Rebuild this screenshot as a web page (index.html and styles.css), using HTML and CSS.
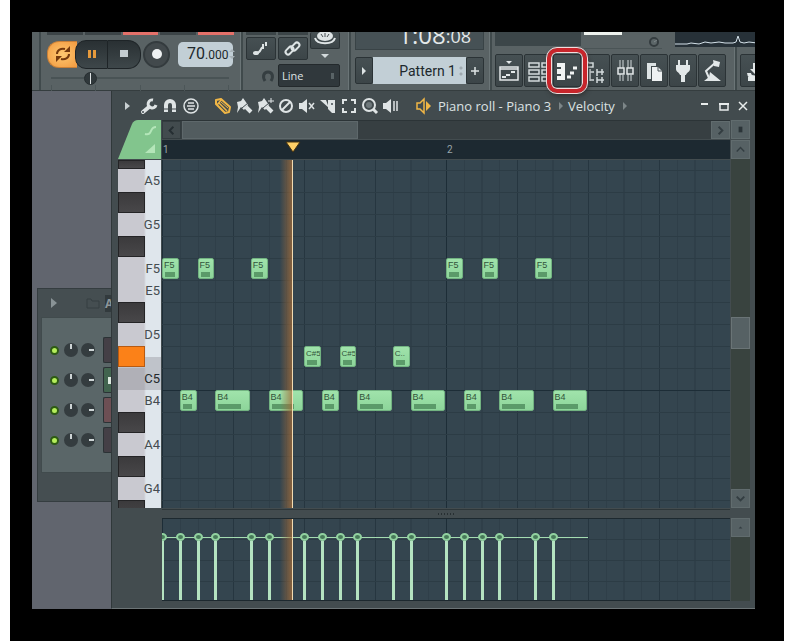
FILE: index.html
```html
<!DOCTYPE html>
<html lang="en">
<head>
<meta charset="utf-8">
<title>Piano roll - Piano 3</title>
<link rel="stylesheet" href="styles.css">
</head>
<body>
<main class="frame">
<div class="app">
  <header class="toolbar">
    <div class="group edge"></div>
    <section class="group transport" aria-label="Transport">
      <div class="stubs"><i></i><i></i><i class="hot"></i><i></i><i class="hot"></i></div>
      <div class="transport-row">
        <button class="loop" aria-label="Loop"><svg viewBox="0 0 18 18"><path d="M3 9c0-4 4-6 8-5M15 9c0 4-4 6-8 5" fill="none" stroke="#74390d" stroke-width="2"/><path d="M10 7h6V1zM8 11H2v6z" fill="#74390d"/></svg></button>
        <button class="pause" aria-label="Pause"><svg viewBox="0 0 18 18"><path d="M5 5h3v8H5zM10 5h3v8h-3z" fill="#e69a3c"/></svg></button>
        <button class="stop" aria-label="Stop"><svg viewBox="0 0 18 18"><path d="M5 5h8v7H5z" fill="#c3ccd0"/></svg></button>
        <button class="record" aria-label="Record"><svg viewBox="0 0 18 18"><circle cx="9" cy="9" r="5" fill="#eef1f2"/></svg></button>
        <div class="tempo" role="group" aria-label="Tempo"><span class="tempo-int">70</span><span>.000</span><svg viewBox="0 0 6 12"><path d="M0 4l3-3 3 3zM0 8l3 3 3-3z" fill="#a9b3b8"/></svg></div>
      </div>
      <input class="position" type="range" min="0" max="100" value="20" aria-label="Song position">
      <div class="ticks"><i></i><i></i><i></i><i></i><i></i></div>
    </section>
    <section class="group tools" aria-label="Tools">
      <div class="tool-top">
        <div class="tool-pair">
          <i></i><i></i>
          <button class="dark" aria-label="Step edit"><svg viewBox="0 0 20 20"><path d="M5 14c6 0 3-4 7-6" fill="none" stroke="#dde3e4" stroke-width="2"/><ellipse cx="5" cy="14" rx="3" ry="2" fill="#dde3e4"/><path d="M11 5h2v5h-2zM14 3h2v4h-2z" fill="#dde3e4"/></svg></button>
          <button class="dark" aria-label="Link"><svg viewBox="0 0 20 20"><g fill="none" stroke="#dde3e4" stroke-width="2"><rect x="2" y="9" width="9" height="5" rx="2.500" transform="rotate(-45 6.500 11.500)"/><rect x="8" y="5" width="9" height="5" rx="2.500" transform="rotate(-45 12.500 7.500)"/></g></svg></button>
        </div>
        <div class="tool-side">
          <button class="dark half" aria-label="Render"><svg viewBox="0 0 24 16"><ellipse cx="12" cy="4" rx="8" ry="5" fill="#dfe5e6"/><path d="M2 6c2 7 18 7 20 0" fill="none" stroke="#dfe5e6" stroke-width="2"/><path d="M8 2l2 3M12 1v4M16 2l-2 3" stroke="#495154" stroke-width="1"/></svg></button>
          <span class="down"></span>
        </div>
      </div>
      <div class="snap">
        <svg viewBox="0 0 14 14"><path d="M4 12C1 7 3 3 7 3s6 4 3 9" fill="none" stroke="#353e41" stroke-width="3"/></svg>
        <select aria-label="Snap"><option>Line</option></select>
      </div>
    </section>
    <section class="group pattern" aria-label="Pattern">
      <div class="clock"><span>1:08</span><small>:08</small></div>
      <div class="pattern-row">
        <button class="dark" aria-label="Pattern menu"><svg viewBox="0 0 10 10"><path d="M3 1l4 4-4 4z" fill="#dde3e4"/></svg></button>
        <input type="text" value="Pattern 1" aria-label="Pattern name">
        <button class="dark" aria-label="Add pattern"><svg viewBox="0 0 10 10"><path d="M5 1v8M1 5h8" stroke="#dde3e4" fill="none" stroke-width="1.500"/></svg></button>
      </div>
    </section>
    <section class="group windows" aria-label="Windows">
      <div class="meters">
        <div class="hint"></div>
        <div class="cpu"><i></i><svg viewBox="0 0 10 10"><circle cx="5" cy="5" r="4" fill="#5c6668" stroke="#343c3f" stroke-width="2"/><path d="M5 5l3-2" stroke="#7d8688"/></svg></div>
      </div>
      <nav class="window-buttons">
        <button class="dark" aria-label="Playlist"><svg viewBox="0 0 22 26"><path d="M8 3h6l-3 3z" fill="#e3e8e9"/><path d="M2 9h18v13H2zM2 11h18" fill="none" stroke="#e3e8e9" stroke-width="1.500"/><path d="M4 19h4M8 17h4M13 14h4" stroke="#e3e8e9" stroke-width="2"/></svg></button>
        <button class="dark" aria-label="Step sequencer"><svg viewBox="0 0 22 26"><path d="M2 5h10v4H2zM2 12h10v4H2zM2 19h10v4H2zM15 5h6v4h-6zM15 12h6v4h-6zM15 19h6v4h-6z" fill="none" stroke="#d3dadc" stroke-width="1.500"/></svg></button>
        <button class="dark marked" aria-label="Piano roll"><svg viewBox="0 0 22 26"><path d="M1 5h8v17H1v-4h4v-2H1v-5h4V9H1z" fill="#f1f4f4"/><path d="M11 19h4M14 15h4M17 10h4" stroke="#f1f4f4" stroke-width="3"/></svg></button>
        <button class="dark" aria-label="Browser"><svg viewBox="0 0 22 26"><path d="M0 9V4h3l1 1h4v4zM5 11v12M5 14h4M5 22h4M12 11v7M12 14h7M17 11v6M12 19v6M12 22h7M17 19v6" fill="none" stroke="#d3dadc" stroke-width="1.500"/></svg></button>
        <button class="dark" aria-label="Mixer"><svg viewBox="0 0 22 26"><path d="M6 2v21M9 2v8M9 17v6M14 2v21M17 2v8M17 17v6" stroke="#d3dadc" fill="none"/><path d="M4 10h6v6H4zM13 10h6v6h-6z" fill="#4b5558" stroke="#e3e8e9" stroke-width="1.500"/></svg></button>
        <button class="dark" aria-label="Project"><svg viewBox="0 0 22 26"><path d="M4 5h9v3H8v13H4z" fill="#dde3e4"/><path d="M9 9h6l4 4v10H9z" fill="#eef1f2"/><path d="M15 9v4h4" fill="none" stroke="#4b5558"/></svg></button>
        <button class="dark" aria-label="Plugins"><svg viewBox="0 0 22 26"><path d="M7 2v6M15 2v6" stroke="#e3e8e9" stroke-width="2"/><path d="M4 7h14v4c0 3-3 3-4 6h-1v7H9v-7H8c-1-3-4-3-4-6z" fill="#e3e8e9"/></svg></button>
        <button class="dark" aria-label="Tempo tapper"><svg viewBox="0 0 22 26"><path d="M3 23l5-4 1-5 11 9z" fill="#e3e8e9"/><path d="M8 20L5 13l9-8" fill="none" stroke="#e3e8e9" stroke-width="2"/><path d="M12 2l7 2-1 5-5-1z" fill="#e3e8e9"/></svg></button>
      </nav>
    </section>
    <section class="group last" aria-label="Save">
      <svg class="scope" viewBox="0 0 82 15" preserveAspectRatio="none"><path d="M0 12h12l4-1 8 1 6-2 6 1 8-1 6 1h8l3-1 2-6 2 6 4 1 5-1 8 1" fill="none" stroke="#d5e2ea"/></svg>
      <button class="dark" aria-label="Save"><svg viewBox="0 0 22 26"><path d="M6 15c0 6 12 6 12 0M5 21h14" fill="none" stroke="#e3e8e9" stroke-width="4"/><path d="M10 5h6v6h4l-7 6-6-6h3z" fill="#e3e8e9"/></svg></button>
    </section>
  </header>

  <div class="workspace">
    <aside class="dock">
      <section class="rack" aria-label="Channel rack">
        <div class="rack-head"><svg viewBox="0 0 8 10"><path d="M1 0l6 5-6 5z" fill="#899396"/></svg><svg class="folder" viewBox="0 0 14 12"><path d="M1 11V2h4l1 2h7v7z" fill="none" stroke="#363f42"/></svg><b>A</b></div>
        <div class="rack-body" id="rack"></div>
      </section>
    </aside>

    <section class="roll" aria-label="Piano roll">
      <div class="titlebar">
        <div class="icons first">
          <button aria-label="Menu"><svg viewBox="0 0 18 18"><path d="M6 5l5 4-5 4z" fill="#c9d0d2"/></svg></button>
          <button aria-label="Tools"><svg viewBox="0 0 18 18"><path d="M3 15l6-5" stroke="#dfe4e5" stroke-width="4" stroke-linecap="round"/><path d="M13 3a4 4 0 1 0 3 5" fill="none" stroke="#dfe4e5" stroke-width="3"/><circle cx="3" cy="15" r="1" fill="#424b4f"/></svg></button>
          <button aria-label="Magnet"><svg viewBox="0 0 18 18"><path d="M5 15V8a4 4 0 0 1 8 0v7" fill="none" stroke="#dfe4e5" stroke-width="4"/><path d="M3 12h4M11 12h4" stroke="#424b4f"/></svg></button>
          <button aria-label="Stamp"><svg viewBox="0 0 18 18"><circle cx="9" cy="9" r="7" fill="none" stroke="#dfe4e5" stroke-width="1.500"/><path d="M6 6h6M5 9h8M6 12h6" stroke="#dfe4e5" stroke-width="1.500"/></svg></button>
        </div>
        <div class="icons second">
          <button aria-label="Draw"><svg viewBox="0 0 18 18"><path d="M2 7V3l5-1 9 8-1 5-4 1z" fill="none" stroke="#f0b646" stroke-width="2" stroke-linejoin="round"/><path d="M3 8l5-6M5 6l8 8" stroke="#f0b646" stroke-width="1.500"/><path d="M7 5l7 6" stroke="#f0b646"/></svg></button>
          <button aria-label="Paint"><svg viewBox="0 0 18 18"><path d="M2 5l4-1 2-3 5 7-4 5-3-3-4 6 1-6z" fill="#dfe4e5"/><path d="M11 10l5 5" stroke="#dfe4e5" stroke-width="4"/><path d="M7 11l6-5" stroke="#424b4f"/></svg></button>
          <button aria-label="Paint sequence"><svg viewBox="0 0 18 18"><path d="M2 5l4-1 2-3 5 7-4 5-3-3-4 6 1-6z" fill="#dfe4e5"/><path d="M11 10l5 5" stroke="#dfe4e5" stroke-width="4"/><path d="M7 11l6-5" stroke="#424b4f"/><path d="M15 1v5M12 4h6" stroke="#dfe4e5"/></svg></button>
          <button aria-label="Delete"><svg viewBox="0 0 18 18"><circle cx="9" cy="9" r="6" fill="none" stroke="#dfe4e5" stroke-width="2"/><path d="M5 13l8-8" stroke="#dfe4e5" stroke-width="2"/></svg></button>
          <button aria-label="Mute"><svg viewBox="0 0 18 18"><path d="M1 6h3l5-4v14l-5-4H1z" fill="#dfe4e5"/><path d="M11 6l5 6M16 6l-5 6" stroke="#dfe4e5" stroke-width="1.500"/></svg></button>
          <button aria-label="Slice"><svg viewBox="0 0 18 18"><path d="M1 3h6l3 8z" fill="#dfe4e5"/><path d="M9 3h7v13h-3l-4-4z" fill="#dfe4e5"/><circle cx="13" cy="7" r="1" fill="#424b4f"/></svg></button>
          <button aria-label="Select"><svg viewBox="0 0 18 18"><path d="M3 7V3h4M11 3h4v4M15 11v4h-4M7 15H3v-4" fill="none" stroke="#dfe4e5" stroke-width="2"/></svg></button>
          <button aria-label="Zoom"><svg viewBox="0 0 18 18"><circle cx="8" cy="8" r="6" fill="none" stroke="#dfe4e5" stroke-width="2"/><circle cx="8" cy="8" r="3" fill="#6e787b"/><path d="M12 12l4 4" stroke="#dfe4e5" stroke-width="3"/></svg></button>
          <button aria-label="Playback"><svg viewBox="0 0 18 18"><path d="M1 6h3l5-4v14l-5-4H1z" fill="#dfe4e5"/><path d="M12 4v10M15 4v10" stroke="#dfe4e5" stroke-width="1.500"/></svg></button>
        </div>
        <h1><svg viewBox="0 0 18 18"><path d="M2 6h3l4-4v14l-4-4H2z" fill="none" stroke="#f0b646" stroke-width="1.500"/><path d="M11 4l5 5-5 5z" fill="#f0b646"/></svg><span>Piano roll - Piano 3</span><i class="crumb"></i><span>Velocity</span><i class="crumb"></i></h1>
        <div class="icons controls">
          <button aria-label="Minimize"><svg viewBox="0 0 18 18"><path d="M5 7h7" stroke="#e8ecec" stroke-width="2"/></svg></button>
          <button aria-label="Maximize"><svg viewBox="0 0 18 18"><path d="M5 7h8v6H5z" fill="none" stroke="#e8ecec" stroke-width="1.500"/><path d="M4 7h10" stroke="#e8ecec" stroke-width="2"/></svg></button>
          <button aria-label="Close"><svg viewBox="0 0 18 18"><path d="M5 5l8 8M13 5l-8 8" stroke="#e8ecec" stroke-width="1.500"/></svg></button>
        </div>
      </div>

      <div class="editor">
        <div class="corner"><svg viewBox="0 0 43 39"><path d="M0 39L14 4Q16 0 20 0h23v39z" fill="#82c58d"/><path d="M27 14c8 2 4-7 11-7" fill="none" stroke="#b4e6b9" stroke-width="2"/><path d="M27 33h10V24z" fill="#b4e6b9"/></svg></div>
        <div class="hscroll">
          <button class="sq" aria-label="Scroll left"><svg viewBox="0 0 18 18"><path d="M11 5L7 9l4 4" fill="none" stroke="#252e32" stroke-width="2"/></svg></button>
          <div class="hthumb"></div>
          <button class="sq lit" aria-label="Scroll right"><svg viewBox="0 0 18 18"><path d="M7 5l4 4-4 4" fill="none" stroke="#333d41" stroke-width="2"/></svg></button>
        </div>
        <button class="sq lit" aria-label="Scroll options"><svg viewBox="0 0 18 18"><path d="M7 6h4v6H7z" fill="#2b3438"/></svg></button>
        <div class="ruler"><span>1</span><span>2</span><svg class="marker" viewBox="0 0 16 12"><path d="M1 1h14L8 11z" fill="#ffd067" stroke="#47330f"/></svg></div>
        <div class="vscroll">
          <button class="sq lit" aria-label="Scroll up"><svg viewBox="0 0 18 18"><path d="M5 11l4-4 4 4" fill="none" stroke="#333d41" stroke-width="1.500"/></svg></button>
          <div class="vthumb"></div>
          <button class="sq lit" aria-label="Scroll down"><svg viewBox="0 0 18 18"><path d="M5 7l4 4 4-4" fill="none" stroke="#333d41" stroke-width="2"/></svg></button>
        </div>
        <div class="keys" id="keys"></div>
        <div class="lane notes-lane"><div class="notes" id="notes"></div><div class="playhead"></div></div>
        <div class="splitter"><i></i><i></i><i></i><i></i><i></i><i></i></div>
        <div class="lane velocity-lane"><div class="stems" id="stems"></div><div class="playhead"></div></div>
        <div class="vscroll2"><button class="sq lit" aria-label="Velocity options"><svg viewBox="0 0 18 18"><path d="M7 10l2-2 2 2z" fill="#333d41"/></svg></button></div>
      </div>
    </section>
  </div>
</div>
</main>
<script src="roll.js"></script>
</body>
</html>
```
FILE: styles.css
```css
*, *::before, *::after { box-sizing: border-box; }
body { margin: 0; background: #fff; font-family: "Open Sans", "Noto Sans", sans-serif; }
button, input, select { font: inherit; margin: 0; padding: 0; border: 0; color: inherit; }
button { background: none; display: flex; align-items: center; justify-content: center; }
svg { display: block; flex: none; }

.frame { margin: 0 3px 0 10px; padding: 32px 29px 32px 22px; background: #000; min-height: 100vh; }
.app { overflow: hidden; background: #60656d; }

/* toolbar */
.toolbar { display: flex; height: 59px; background: #596264; border-bottom: 1px solid #353d3f; }
.group { border-left: 2px solid #404a4c; border-right: 1px solid #6b7577; flex: none; }
.edge { width: 7px; border: 0; }
.transport { width: 202px; padding: 0 6px 0 6px; }
.stubs { display: flex; gap: 2px; height: 3px; }
.stubs i { flex: 1; background: #3c4447; }
.stubs .hot { background: #e4716a; }
.transport-row { display: flex; align-items: center; margin-top: 5px; height: 28px; }
.transport-row svg { width: 18px; height: 18px; }
.loop { width: 30px; height: 27px; border-radius: 12px 0 0 12px; background: radial-gradient(#ffc871, #f29a3f); border: 1px solid #c98038; border-right: 0; }
.pause { width: 33px; height: 29px; margin-left: -2px; border-radius: 11px 0 0 11px; background: linear-gradient(#293033, #3e474a); border: 1px solid #1e2427; }
.stop { width: 33px; height: 29px; border-radius: 0 13px 13px 0; background: linear-gradient(#293033, #3e474a); border: 1px solid #1e2427; border-left: 0; }
.record { width: 27px; height: 27px; margin-left: 2px; border-radius: 50%; background: #42494c; border: 2px solid #343b3e; }
.tempo { display: flex; align-items: baseline; width: 55px; height: 25px; margin-left: 8px; padding-left: 9px; border-radius: 5px; background: #c2cfd6; color: #20282c; font: 12px/24px Roboto, sans-serif; }
.tempo-int { font-size: 16px; }
.tempo svg { width: 6px; height: 12px; margin-left: 1px; align-self: center; }
.position { appearance: none; display: block; width: 178px; height: 14px; margin: 3px 0 0 4px; background: linear-gradient(#495355, #495355) center / 100% 2px no-repeat; }
.position::-webkit-slider-thumb { appearance: none; width: 13px; height: 13px; border-radius: 50%; border: 1px solid #252c2f; background: linear-gradient(90deg, #30383b 5px, #dfe4e5 5px, #dfe4e5 6px, #30383b 6px); }
.ticks { display: flex; justify-content: space-between; margin-left: 4px; height: 7px; width: 178px; }
.ticks i { width: 1px; background: #4c5658; }

.tools { width: 108px; padding-left: 3px; }
.dark { background: linear-gradient(#465053, #3c4548); border: 1px solid #2b3336; border-radius: 2px; }
.tool-top { display: flex; gap: 2px; }
.tool-pair { display: grid; grid-template-columns: 30px 30px; grid-template-rows: 3px 23px; gap: 2px; }
.tool-pair i { background: #3c4548; }
.tool-pair svg { width: 20px; height: 20px; }
.tool-side { display: flex; flex-direction: column; align-items: center; }
.half { width: 30px; height: 17px; border-top: 0; align-items: flex-start; }
.half svg { width: 24px; height: 16px; }
.down { margin-top: 5px; border: 4px solid transparent; border-top-color: #d3dadc; border-bottom: 0; }
.snap { display: flex; align-items: center; gap: 3px; margin: 4px 0 0 15px; }
.snap svg { width: 14px; height: 14px; }
.snap select { appearance: none; width: 62px; height: 23px; padding-left: 3px; border: 1px solid #23292c; border-radius: 2px; background: linear-gradient(90deg, transparent 52px, #596366 52px, #596366 55px, transparent 55px) 0 8px / 100% 6px no-repeat, #30383c; color: #dde3e4; font-size: 11px; }

.pattern { width: 141px; padding-left: 4px; }
.clock { display: flex; align-items: flex-end; justify-content: flex-end; overflow: hidden; width: 129px; height: 18px; padding-right: 12px; background: #465155; border: 1px solid #394346; border-top: 0; color: #e3e8e9; font-size: 24px; line-height: 28px; }
.clock small { font-size: 18px; line-height: 25px; }
.pattern-row { display: flex; height: 27px; margin-top: 7px; width: 129px; }
.pattern-row button { width: 18px; }
.pattern-row svg { width: 10px; height: 10px; }
.pattern-row input { flex: 1; min-width: 0; padding-right: 10px; background: radial-gradient(circle, #9fa9af 1px, transparent 2px) 86px 8px / 4px 6px no-repeat, radial-gradient(circle, #9fa9af 1px, transparent 2px) 86px 14px / 4px 6px no-repeat, #c2cfd6; color: #20282c; text-align: right; font: 14px Roboto, sans-serif; }

.windows { width: 245px; padding-left: 3px; }
.meters { display: flex; gap: 3px; height: 17px; }
.hint { width: 86px; height: 14px; background: #3c4649; }
.cpu { display: flex; flex-direction: column; width: 78px; border-bottom: 1px solid #4a5456; }
.cpu i { width: 38px; height: 3px; background: #eef2ee; }
.cpu svg { align-self: flex-end; width: 10px; height: 10px; margin: 2px 3px 0 0; }
.window-buttons { display: flex; gap: 1px; margin-top: 5px; }
.window-buttons button, .last button { width: 28px; height: 33px; flex: none; }
.window-buttons svg, .last button svg { width: 22px; height: 26px; }
.marked { position: relative; z-index: 2; }
.marked::after { content: ""; position: absolute; inset: -7px; border: 4px solid #c8252b; border-radius: 10px; outline: 1px solid #f3dcdc; box-shadow: inset 0 0 0 1px #f3dcdc, 1px 3px 4px #333; }
.last { flex: 1; min-width: 0; border-right: 0; padding-left: 3px; }
.scope { width: 82px; height: 15px; margin-left: -65px; background: #273138; }
.last button { margin-top: 7px; }

/* channel rack */
.workspace { display: grid; grid-template-columns: 79px 1fr; }
.dock { padding: 197px 0 0 5px; background: #61656e; }
.rack { height: 214px; padding-left: 3px; background: #454e51; border: 1px solid #353d40; border-right: 0; }
.rack-head { display: flex; align-items: center; height: 28px; padding-left: 9px; color: #8c9598; font-size: 12px; }
.rack-head svg { width: 8px; height: 10px; }
.rack-head .folder { width: 14px; height: 12px; margin-left: 28px; }
.rack-head b { margin-left: 5px; background: #323a3d; flex: 1; }
.rack-body { display: grid; gap: 4px; padding: 19px 0; height: 156px; background: #5a6668; border: 1px solid #414b4d; border-right: 0; align-content: start; }
.channel { display: flex; align-items: center; height: 26px; padding-left: 8px; }
.led { appearance: none; width: 9px; height: 9px; border-radius: 50%; border: 2px solid #2e5b14; background: #b5ee5c; }
.knob { width: 14px; height: 14px; margin-left: 5px; border-radius: 50%; background: linear-gradient(90deg, transparent 6px, #cdd4d5 6px, #cdd4d5 8px, transparent 8px) 0 1px / 14px 5px no-repeat, #343c3f; }
.knob + .knob { margin-left: 3px; background: linear-gradient(#cdd4d5, #cdd4d5) 8px 6px / 5px 2px no-repeat, #343c3f; }
.channel-name { margin-left: 8px; flex: 1; height: 26px; border: 1px solid #2b3235; border-right: 0; border-radius: 2px 0 0 2px; background: #443f46; }
.channel:nth-child(2) .channel-name { background: linear-gradient(90deg, transparent 4px, #dce8df 4px) 0 9px / 8px 7px no-repeat, #42644f; }
.channel:nth-child(3) .channel-name { background: #6d4f54; }

/* piano roll */
.roll { background: #434c4f; border-left: 1px solid #30383a; border-bottom: 1px solid #6c7476; }
.titlebar { display: flex; align-items: center; height: 29px; padding: 0 3px 0 5px; background: #424b4e; }
.icons { display: flex; }
.icons svg, h1 svg { width: 18px; height: 18px; }
.first button, .second button { width: 21px; }
.second { margin-left: 11px; }
h1 { display: flex; align-items: center; flex: 1; margin: 0 0 0 14px; color: #dce2e3; font-size: 13px; line-height: 18px; font-weight: 400; white-space: nowrap; }
h1 span { margin-left: 5px; }
.crumb { margin-left: 8px; border: 4px solid transparent; border-left-color: #7d8688; border-right: 0; }
.controls button { width: 19px; }
.editor { display: grid; grid-template-columns: 43px 1fr 19px; grid-template-rows: 19px 19px 348px 8px 83px; gap: 1px; padding: 0 5px 7px 6px; }
.corner { grid-row: 1 / 3; }
.corner svg { width: 43px; height: 39px; }
.sq { width: 19px; height: 19px; background: #424b4e; border: 1px solid #333c3f; }
.sq.lit { background: #566164; border-color: #616c6e; }
.sq svg { width: 17px; height: 17px; }
.hscroll { display: flex; background: #373f42; border-top: 1px solid #2c3437; }
.hscroll .sq { height: 18px; }
.hscroll .lit { margin-left: auto; }
.hthumb { width: 31%; margin-left: 1px; background: #525c5f; border: 1px solid #5e686b; }
.ruler { position: relative; display: grid; grid-template-columns: 1fr 1fr; background: #1d2931; color: #9aa6ab; font: 10px/20px Roboto, sans-serif; }
.ruler span { padding-left: 1px; }
.marker { position: absolute; left: calc(23% - 8px); top: 1px; width: 16px; height: 12px; }
.vscroll { grid-row: 2 / 4; grid-column: 3; display: flex; flex-direction: column; background: #39433f; }
.vthumb { height: 32px; margin: 158px 0 auto; background: #566164; border: 1px solid #6a7476; }

.keys { overflow: hidden; background: linear-gradient(90deg, #c9c9d0 26px, #dfe6ec 28px); color: #454c50; font: 13px/22px Roboto, sans-serif; text-align: right; }
.key { height: 22px; padding-right: 1px; }
.key.black::before { content: ""; display: block; width: 27px; height: 21px; background: linear-gradient(#3b3a3c, #484749); border: 1px solid #242426; }
.key.cut { height: 10px; overflow: hidden; }
.key.cut::before { height: 9px; }
.key.root { background: linear-gradient(90deg, #b0b0b7 26px, #bfc3ca 28px); color: #24292c; }
.key.active { background: linear-gradient(transparent 11px, #bfc3ca 11px); }
.key.active::before { background: #fb8118; border-color: #b75a12; }

.lane { position: relative; overflow: hidden; background-color: #34454f;
  background-image:
    repeating-linear-gradient(90deg, #1d2d37 0 1px, transparent 1px calc(100% / 2)),
    repeating-linear-gradient(90deg, #263640 0 1px, transparent 1px calc(100% / 8)),
    repeating-linear-gradient(90deg, #2f3f49 0 1px, transparent 1px calc(100% / 32)); }
.notes { display: grid; height: 100%; grid-template-columns: repeat(32, minmax(0, 1fr)); grid-template-rows: 10px repeat(16, 22px);
  background: linear-gradient(#1d2d37, #1d2d37) 0 230px / 100% 1px no-repeat, repeating-linear-gradient(#2c3c45 0 1px, transparent 1px 22px) 0 10px; }
.note { height: 21px; margin-right: 1px; padding: 1px; overflow: hidden; border: 1px solid #72b381; border-radius: 2px; background: linear-gradient(#a0e3ab, #8dd59a); color: #31533a; font: 9px/11px "Liberation Sans", sans-serif; white-space: nowrap; }
.note.tight { font-size: 8px; }
.note::after { content: ""; display: block; width: 75%; height: 5px; margin: 1px 0 0 1px; background: #5b9a69; }
.playhead { position: absolute; top: 0; bottom: 0; right: 77%; width: 13px; border-right: 1px solid #f3dcb2; background: linear-gradient(90deg, transparent, #a46c38bb); }
.splitter { grid-column: 2; display: flex; gap: 2px; justify-content: center; align-items: center; border-top: 1px solid #2d3639; }
.splitter i { width: 1px; height: 2px; margin-right: 0; background: #272f32; }
.velocity-lane { grid-column: 2; border-top: 1px solid #1d292f; border-bottom: 1px solid #1d292f; }
.stems { display: grid; height: 100%; grid-template-columns: repeat(32, minmax(0, 1fr)); background: linear-gradient(90deg, #a3dcb0 75%, transparent 75%) 0 18px / 100% 1px no-repeat, repeating-linear-gradient(transparent 0 20px, #2c3c45 20px 21px); }
.stem { grid-row: 1; margin: 14px 0 0 -4px; }
.stem::before { content: ""; display: block; width: 9px; height: 8px; border: 2px solid #92d2a0; border-radius: 50%; background: #477959; }
.stem::after { content: ""; display: block; width: 3px; height: 60px; margin-left: 3px; background: #b4e3c1; }
.vscroll2 { grid-column: 3; background: #39433f; }
```
FILE: roll.js
```js
const rows = ["A#5", "A5", "G#5", "G5", "F#5", "F5", "E5", "D#5", "D5", "C#5", "C5", "B4", "A#4", "A4", "G#4", "G4", "F#4"];

// [pitch, start step, length in steps, short label]
const notes = [
  ["F5", 0, 1], ["B4", 1, 1], ["F5", 2, 1], ["B4", 3, 2], ["F5", 5, 1], ["B4", 6, 2],
  ["C#5", 8, 1], ["B4", 9, 1], ["C#5", 10, 1], ["B4", 11, 2], ["C#5", 13, 1, "C.."], ["B4", 14, 2],
  ["F5", 16, 1], ["B4", 17, 1], ["F5", 18, 1], ["B4", 19, 2], ["F5", 21, 1], ["B4", 22, 2]
];

function add(parent, className, text) {
  const el = document.createElement("div");
  el.className = className;
  if (text) el.textContent = text;
  parent.append(el);
  return el;
}

const keys = document.getElementById("keys");
rows.forEach((name, i) => {
  const black = name.includes("#");
  let cls = black ? "key black" : "key";
  if (i === 0) cls += " cut";
  if (name === "C5") cls += " root";
  if (name === "C#5") cls += " active";
  add(keys, cls, black ? "" : name);
});

const lane = document.getElementById("notes");
const stems = document.getElementById("stems");
for (const [pitch, start, length, label] of notes) {
  const text = label || pitch;
  const note = add(lane, text.length > 2 ? "note tight" : "note", text);
  note.style.gridArea = `${rows.indexOf(pitch) + 1} / ${start + 1} / auto / span ${length}`;
  add(stems, "stem").style.gridColumn = start + 1;
}

const rack = document.getElementById("rack");
for (let i = 1; i <= 4; i++) {
  const channel = add(rack, "channel");
  const led = document.createElement("input");
  led.type = "checkbox";
  led.checked = true;
  led.className = "led";
  led.setAttribute("aria-label", `Channel ${i}`);
  channel.append(led);
  add(channel, "knob");
  add(channel, "knob");
  add(channel, "channel-name");
}
```
